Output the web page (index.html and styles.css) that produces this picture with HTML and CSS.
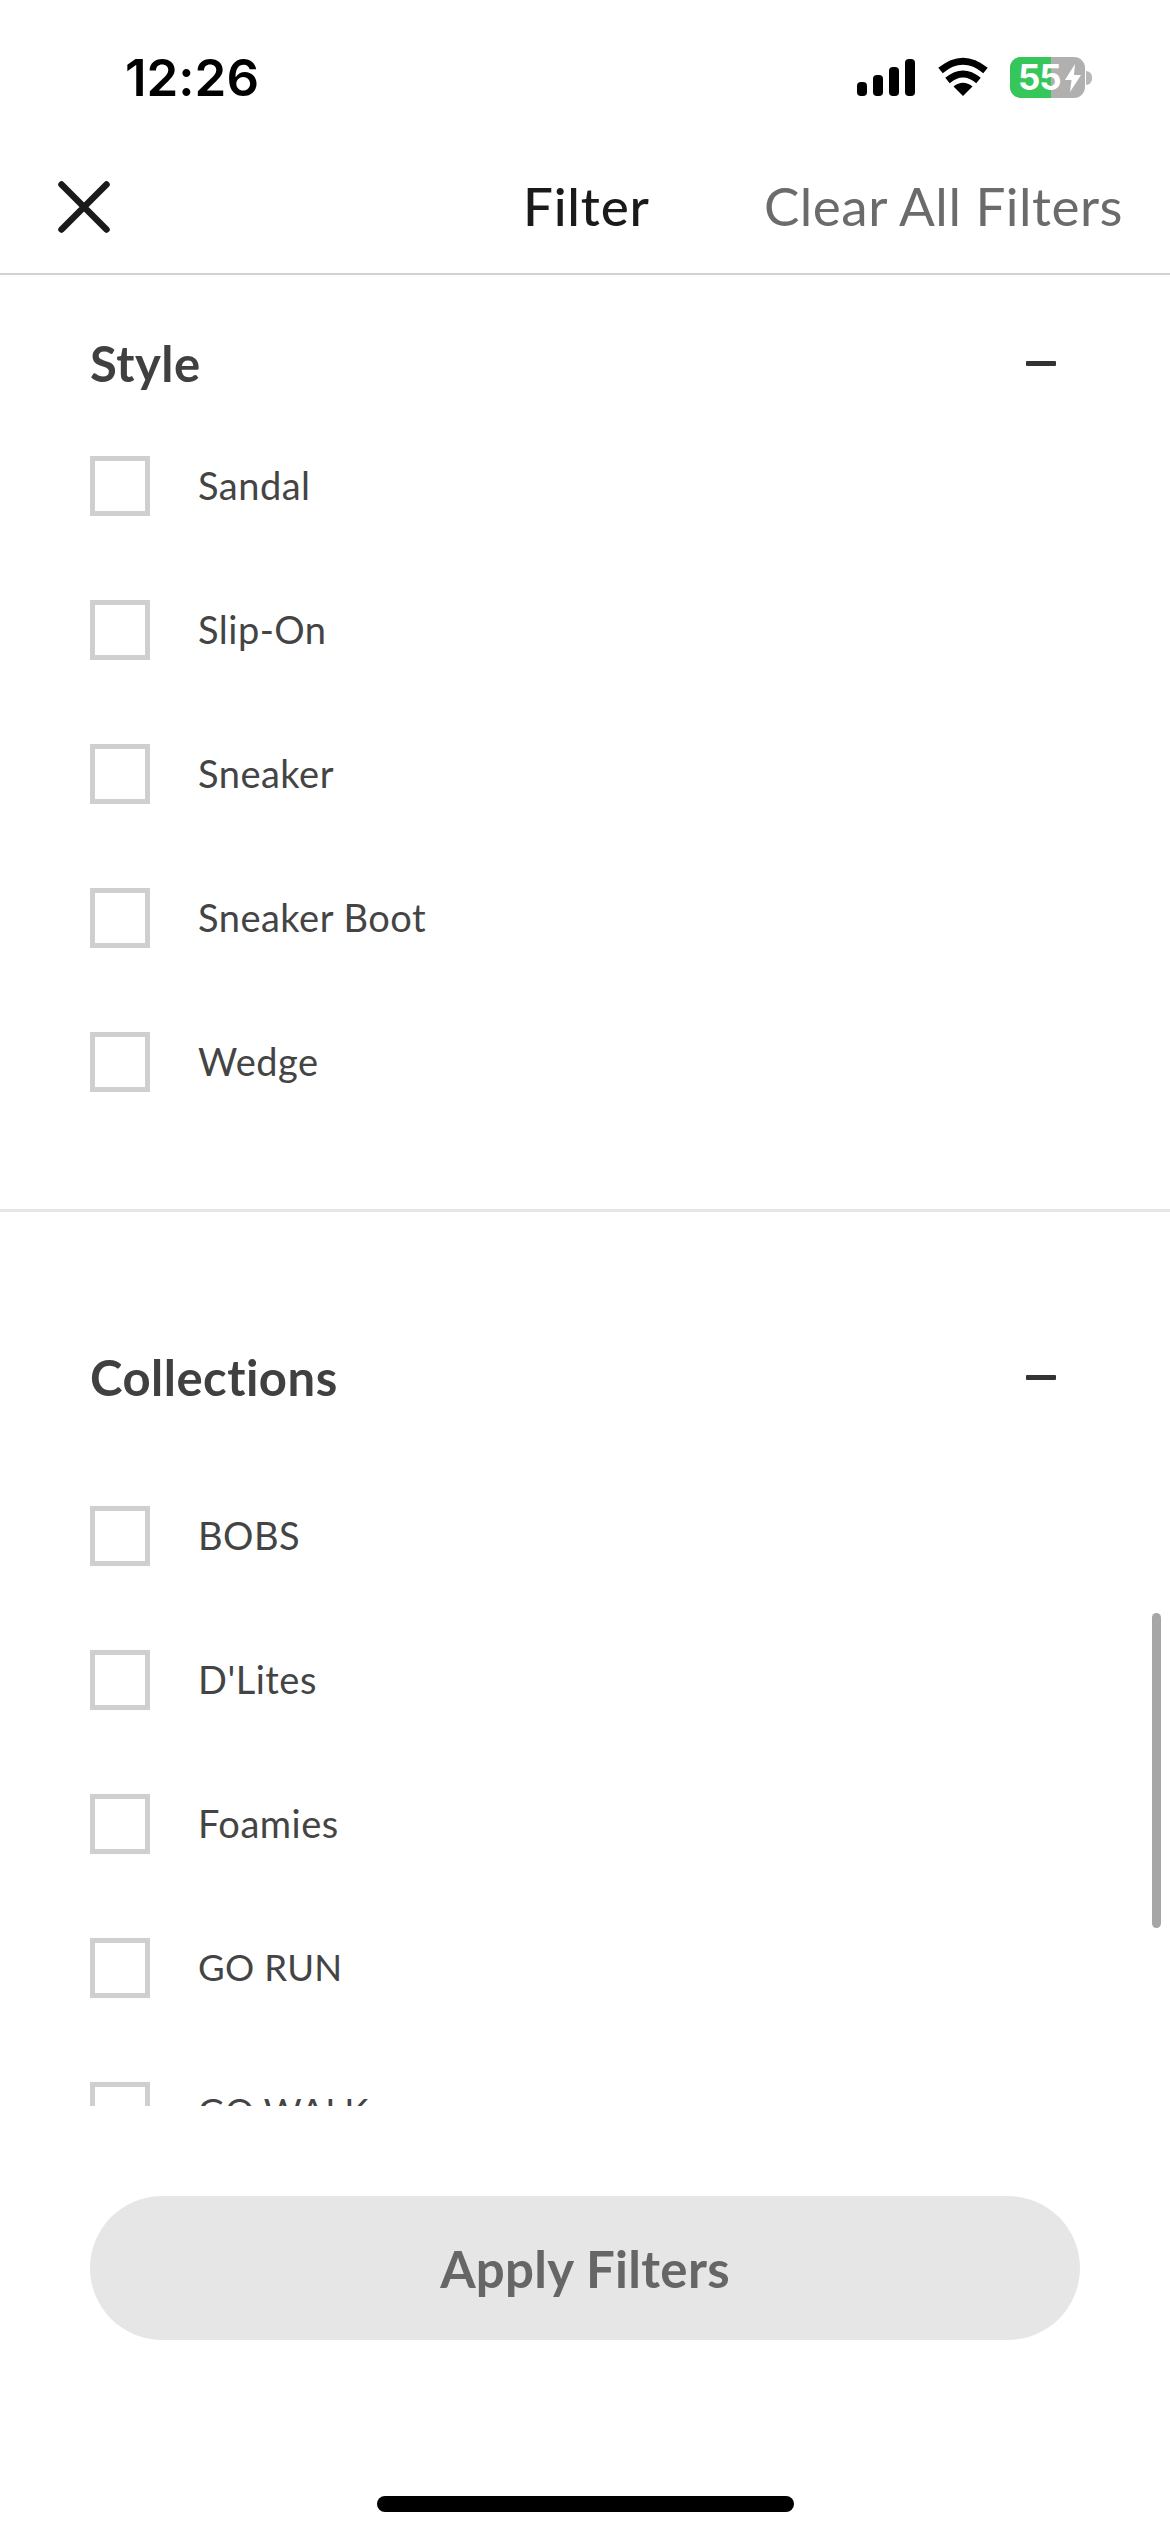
FILE: index.html
```html
<!DOCTYPE html>
<html lang="en">
<head>
<meta charset="utf-8">
<title>Filter</title>
<link rel="stylesheet" href="styles.css">
</head>
<body>
<div class="page">
  <div class="status">
    <span class="time">12:26</span>
    <div class="status-icons">
      <svg class="signal" viewBox="0 0 58 37" width="58" height="37"><rect x="0" y="23" width="10" height="14" rx="4" /><rect x="16" y="16" width="10" height="21" rx="4"/><rect x="32" y="8" width="10" height="29" rx="4"/><rect x="48" y="0" width="10" height="37" rx="4"/></svg>
      <svg class="wifi" viewBox="0 0 50 37" width="50" height="37"><path d="M25 37 L15.5 27.5 Q25 20 34.5 27.5 Z"/><path d="M9.5 21.5 Q25 8.5 40.5 21.5" class="arc"/><path d="M2.5 11.5 Q25 -7 47.5 11.5" class="arc"/></svg>
      <div class="battery">
        <div class="cell"><div class="charge"></div><span class="pct">55</span><svg class="bolt" viewBox="0 0 16 28" width="16" height="28"><path d="M10 0 L0 16 H6.5 L5 28 L16 11 H9 Z"/></svg></div>
        <div class="nub"></div>
      </div>
    </div>
  </div>
  <header class="bar">
    <svg class="close" viewBox="0 0 52 52" width="52" height="52"><path d="M3.5 3.5 L48.5 48.5 M48.5 3.5 L3.5 48.5"/></svg>
    <h1 class="title">Filter</h1>
    <span class="clear">Clear All Filters</span>
  </header>
  <main class="scroller">
    <section class="group group-first">
      <div class="group-head"><h2>Style</h2><span class="minus"></span></div>
      <ul class="list">
        <li class="item"><span class="box"></span><span class="label">Sandal</span></li>
        <li class="item"><span class="box"></span><span class="label">Slip-On</span></li>
        <li class="item"><span class="box"></span><span class="label">Sneaker</span></li>
        <li class="item"><span class="box"></span><span class="label">Sneaker Boot</span></li>
        <li class="item"><span class="box"></span><span class="label">Wedge</span></li>
      </ul>
    </section>
    <section class="group group-second">
      <div class="group-head"><h2>Collections</h2><span class="minus"></span></div>
      <ul class="list list-second">
        <li class="item"><span class="box"></span><span class="label">BOBS</span></li>
        <li class="item"><span class="box"></span><span class="label">D'Lites</span></li>
        <li class="item"><span class="box"></span><span class="label">Foamies</span></li>
        <li class="item"><span class="box"></span><span class="label label-caps">GO RUN</span></li>
        <li class="item"><span class="box"></span><span class="label label-caps">GO WALK</span></li>
      </ul>
    </section>
    <div class="scrollbar"></div>
  </main>
  <footer class="foot">
    <button class="apply">Apply Filters</button>
    <div class="home"></div>
  </footer>
</div>
</body>
</html>
```
FILE: styles.css
```css
* { box-sizing: border-box; }
html, body { margin: 0; padding: 0; background: #fff; }
.page {
  width: 1170px;
  height: 2532px;
  display: flex;
  flex-direction: column;
  overflow: hidden;
  font-family: "Lato", "Noto Sans", sans-serif;
  font-variant-ligatures: none;
  background: #fff;
}
.status {
  height: 136px;
  flex: none;
  display: flex;
  justify-content: space-between;
  align-items: flex-start;
  padding: 50px 78px 0 125px;
}
.time {
  font-family: "Inter", sans-serif;
  font-weight: 600;
  font-size: 51px;
  line-height: 56px;
  color: #000;
}
.status-icons { display: flex; align-items: flex-start; padding-top: 7px; }
.signal { display: block; margin-top: 2px; fill: #000; }
.wifi { display: block; margin: 2px 22px 0 23px; fill: #000; overflow: visible; }
.wifi .arc { fill: none; stroke: #000; stroke-width: 7; }
.battery { display: flex; align-items: center; }
.cell {
  position: relative;
  width: 75px;
  height: 41px;
  border-radius: 11px;
  background: #b0b0b0;
  overflow: hidden;
  display: flex;
  align-items: center;
}
.charge { position: absolute; left: 0; top: 0; bottom: 0; width: 41px; background: #35c759; }
.pct {
  position: relative;
  margin-left: 8px;
  font-family: "Inter", sans-serif;
  font-weight: 700;
  font-size: 35px;
  line-height: 41px;
  letter-spacing: -1px;
  color: #fff;
}
.bolt { position: relative; margin-left: 4px; fill: #fff; flex: none; }
.nub { width: 6px; height: 14px; margin-left: 1px; background: #b8b8b8; border-radius: 0 7px 7px 0; }

.bar {
  height: 139px;
  flex: none;
  display: flex;
  align-items: center;
  padding: 2px 47px 0 58px;
  border-bottom: 2px solid #d2d2d2;
}
.close { display: block; flex: none; margin-top: 3px; fill: none; stroke: #1a1a1a; stroke-width: 6.5; stroke-linecap: round; }
.title {
  margin: 0 0 0 413px;
  font-weight: 500;
  font-size: 53px;
  line-height: 60px;
  letter-spacing: .8px;
  color: #1a1a1a;
}
.clear {
  margin-left: auto;
  font-size: 53px;
  line-height: 60px;
  letter-spacing: .5px;
  color: #6b6b6b;
}
.scroller {
  position: relative;
  height: 1831px;
  flex: none;
  overflow: hidden;
}
.group-first { padding-top: 58px; padding-bottom: 117px; border-bottom: 3px solid #e6e6e6; }
.group-second { padding-top: 135px; }
.group-head {
  display: flex;
  align-items: center;
  justify-content: space-between;
  height: 60px;
  padding: 0 114px 0 90px;
}
.group-head h2 {
  margin: 0;
  font-weight: 700;
  font-size: 49px;
  line-height: 60px;
  letter-spacing: .5px;
  color: #404040;
}
.minus { display: block; width: 30px; height: 5px; background: #333; border-radius: 1px; }
.list {
  list-style: none;
  margin: 63px 0 0;
  padding: 0 0 0 90px;
  display: flex;
  flex-direction: column;
  gap: 84px;
}
.list-second { margin-top: 99px; }
.item { display: flex; align-items: center; height: 60px; }
.box { display: block; flex: none; width: 60px; height: 60px; border: 5.5px solid #cfcfcf; background: #fff; }
.label {
  margin: 0 0 2px 48px;
  font-size: 38px;
  line-height: 46px;
  letter-spacing: .5px;
  color: #444;
}
.label-caps { font-size: 36.5px; letter-spacing: .3px; }
.scrollbar {
  position: absolute;
  left: 1152px;
  top: 1338px;
  width: 9px;
  height: 315px;
  border-radius: 5px;
  background: #a6a6a6;
}
.foot {
  flex: 1;
  display: flex;
  flex-direction: column;
  align-items: center;
  padding-top: 90px;
}
.apply {
  display: block;
  width: 990px;
  height: 144px;
  padding: 0;
  border: 0;
  border-radius: 72px;
  background: #e6e6e6;
  font-family: inherit;
  font-weight: 700;
  font-size: 51px;
  letter-spacing: .3px;
  color: #666;
}
.home {
  width: 417px;
  height: 16px;
  margin-top: 156px;
  border-radius: 8px;
  background: #000;
}
```
